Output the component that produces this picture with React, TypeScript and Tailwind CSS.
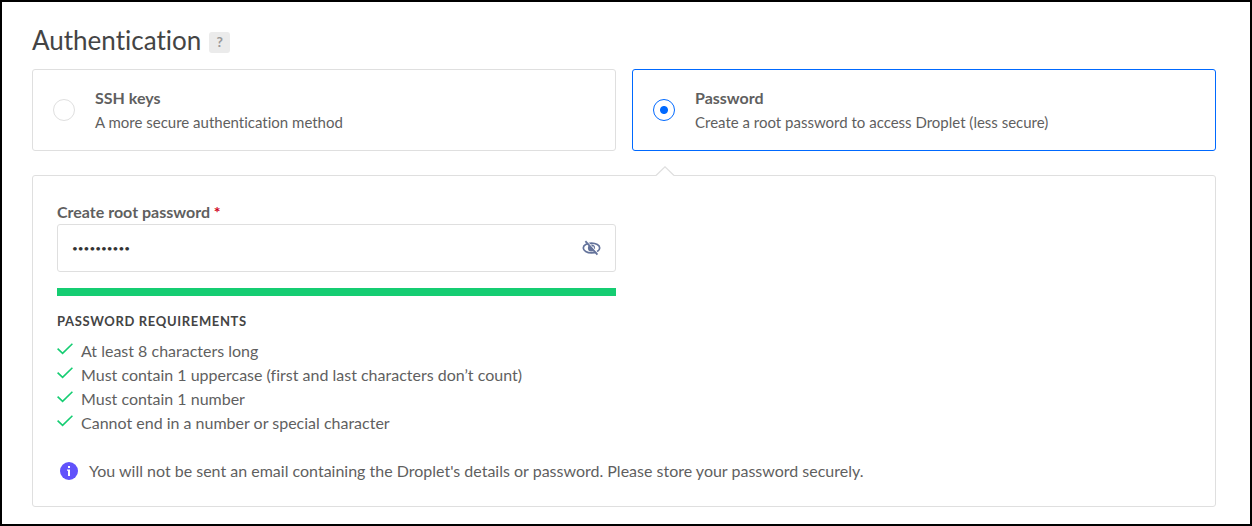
import { useState } from "react";

const requirements = [
  "At least 8 characters long",
  "Must contain 1 uppercase (first and last characters don’t count)",
  "Must contain 1 number",
  "Cannot end in a number or special character",
];

type MethodCardProps = {
  value: string;
  title: string;
  description: string;
  selected: boolean;
  onSelect: (value: string) => void;
};

function MethodCard({ value, title, description, selected, onSelect }: MethodCardProps) {
  return (
    <label
      className={`flex cursor-pointer items-center gap-5 rounded-[3px] border px-5 py-4 ${
        selected ? "border-[#0069ff]" : "border-[#dfdfdf]"
      }`}
    >
      <input
        type="radio"
        name="method"
        value={value}
        checked={selected}
        onChange={() => onSelect(value)}
        className="size-[22px] shrink-0 appearance-none rounded-full border border-[#dfdfdf] bg-white checked:border-[#0069ff] checked:bg-[radial-gradient(circle,#0069ff_3.5px,transparent_4.5px)]"
      />
      <span className="flex flex-col">
        <span className="font-bold">{title}</span>
        <span className="text-[15px] leading-6">{description}</span>
      </span>
    </label>
  );
}

function Check() {
  return (
    <svg viewBox="0 0 16 12" className="mb-1 h-3 w-4 shrink-0" fill="none" stroke="#15cd72" strokeWidth="1.6" aria-hidden="true">
      <path d="M0.6 5.6 5.6 10.4 15.4 0.8" />
    </svg>
  );
}

function HiddenEye() {
  return (
    <svg viewBox="0 0 20 16" className="h-4 w-5" fill="none" stroke="#64739b" aria-hidden="true">
      <ellipse cx="10.5" cy="8" rx="8.2" ry="4.8" strokeWidth="1.7" />
      <circle cx="10.5" cy="8" r="3.6" fill="#64739b" stroke="none" />
      <path d="M12.2 6.4a2.2 2.2 0 0 1-.6 3.2" stroke="#dfe3ee" strokeWidth="0.9" />
      <path d="M5.6 1.2 17 13.4" stroke="#fff" strokeWidth="1.2" />
      <path d="M4.4 1.2 16.4 14.6" strokeWidth="1.8" />
    </svg>
  );
}

export default function App() {
  const [method, setMethod] = useState("password");
  const [visible, setVisible] = useState(false);
  const [password, setPassword] = useState("aBcdeF1ghi");

  return (
    <main className="min-h-screen border-2 border-black bg-white pt-5 pr-[34px] pb-[17px] pl-[30px] font-['Lato','Open_Sans',sans-serif] text-base leading-6 text-[#5f5f5f] [font-variant-ligatures:none]">
      <div className="mb-[11px] flex h-9 items-center gap-2">
        <h1 className="text-[26px] leading-9 text-[#444444]">Authentication</h1>
        <button type="button" aria-label="Help" className="mt-1 size-[21px] rounded-[3px] bg-[#ebebeb] text-sm leading-5 font-bold text-[#999999]">
          ?
        </button>
      </div>

      <div className="grid grid-cols-2 gap-4">
        <MethodCard
          value="ssh"
          title="SSH keys"
          description="A more secure authentication method"
          selected={method === "ssh"}
          onSelect={setMethod}
        />
        <MethodCard
          value="password"
          title="Password"
          description="Create a root password to access Droplet (less secure)"
          selected={method === "password"}
          onSelect={setMethod}
        />
      </div>

      <section className="relative mt-6 rounded-[3px] border border-[#dfdfdf] px-6 pt-6 pb-[23px]">
        <svg viewBox="0 0 20 10" className="absolute -top-[10px] left-1/2 ml-[31px] h-[10px] w-5" aria-hidden="true">
          <path d="M1 9.5 10 0.8 19 9.5V10H1Z" fill="#fff" />
          <path d="M1 9.5 10 0.8 19 9.5" fill="none" stroke="#dfdfdf" strokeWidth="1.2" />
        </svg>

        <div className="w-1/2 pr-2">
          <label htmlFor="root-password" className="block font-bold">
            Create root password <span className="text-[#d0021b]">*</span>
          </label>
          <div className="flex h-12 items-center rounded-[3px] border border-[#dfdfdf] px-[14px]">
            <input
              id="root-password"
              type={visible ? "text" : "password"}
              value={password}
              onChange={(event) => setPassword(event.target.value)}
              className={`h-full min-w-0 flex-1 bg-transparent text-[#333333] outline-none ${
                visible ? "text-base" : "text-[10px]"
              }`}
            />
            <button type="button" aria-label="Show password" onClick={() => setVisible(!visible)}>
              <HiddenEye />
            </button>
          </div>
          <div className="mt-4 h-2 bg-[#15cd72]" />
        </div>

        <h2 className="mt-[15px] text-[13px] leading-5 font-bold tracking-wider text-[#444444] uppercase">Password requirements</h2>
        <ul className="mt-2">
          {requirements.map((text) => (
            <li key={text} className="flex items-center gap-2">
              <Check />
              {text}
            </li>
          ))}
        </ul>

        <p className="mt-6 flex items-center gap-[11px] pl-[3px]">
          <svg viewBox="0 0 18 18" className="size-[18px] shrink-0" aria-hidden="true">
            <circle cx="9" cy="9" r="9" fill="#6152fb" />
            <path d="M8 4h2v2H8zM7 7.5h3V14H8V8.7H7z" fill="#fff" />
          </svg>
          You will not be sent an email containing the Droplet's details or password. Please store your password securely.
        </p>
      </section>
    </main>
  );
}
